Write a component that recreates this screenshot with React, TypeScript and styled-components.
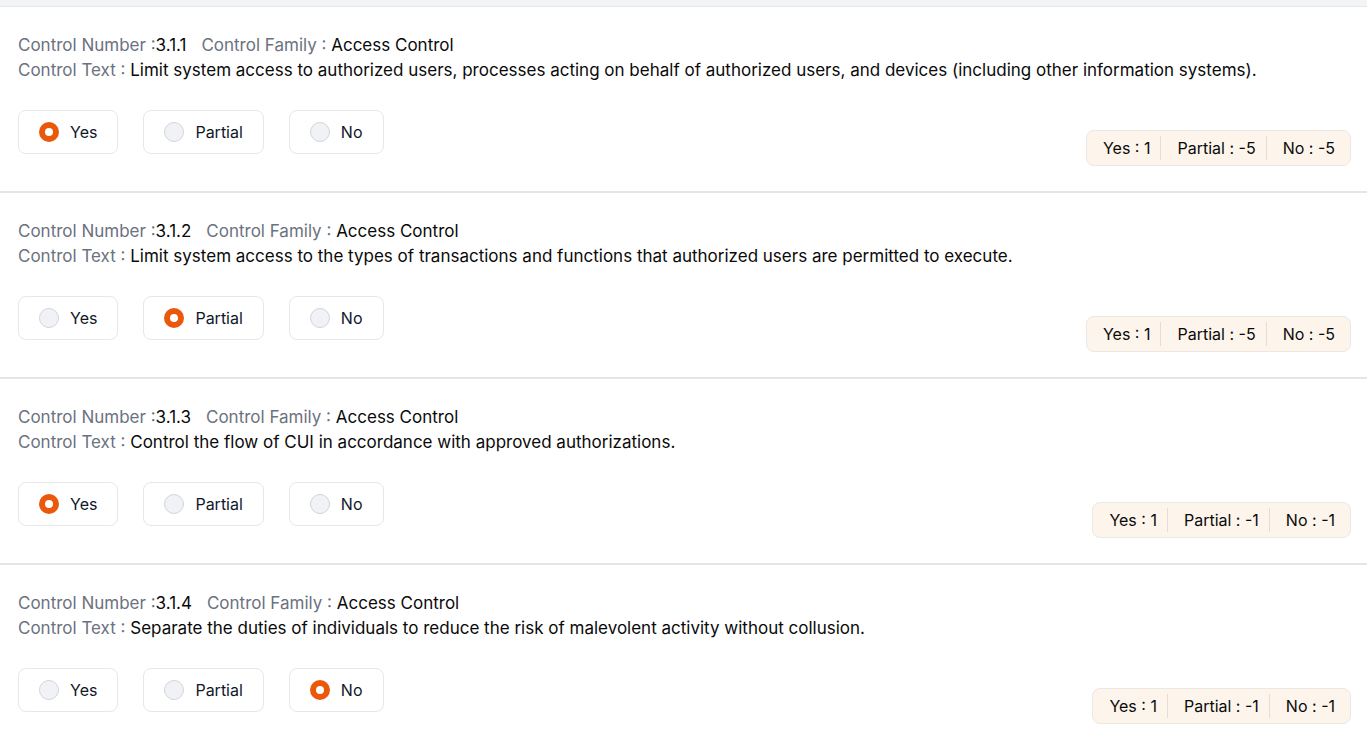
import React from 'react';
import styled, { createGlobalStyle } from 'styled-components';

type Answer = 'yes' | 'partial' | 'no';

interface Control {
  number: string;
  family: string;
  text: string;
  answer: Answer;
  scores: { yes: number; partial: number; no: number };
}

const controls: Control[] = [
  {
    number: '3.1.1',
    family: 'Access Control',
    text: 'Limit system access to authorized users, processes acting on behalf of authorized users, and devices (including other information systems).',
    answer: 'yes',
    scores: { yes: 1, partial: -5, no: -5 },
  },
  {
    number: '3.1.2',
    family: 'Access Control',
    text: 'Limit system access to the types of transactions and functions that authorized users are permitted to execute.',
    answer: 'partial',
    scores: { yes: 1, partial: -5, no: -5 },
  },
  {
    number: '3.1.3',
    family: 'Access Control',
    text: 'Control the flow of CUI in accordance with approved authorizations.',
    answer: 'yes',
    scores: { yes: 1, partial: -1, no: -1 },
  },
  {
    number: '3.1.4',
    family: 'Access Control',
    text: 'Separate the duties of individuals to reduce the risk of malevolent activity without collusion.',
    answer: 'no',
    scores: { yes: 1, partial: -1, no: -1 },
  },
];

const GlobalStyle = createGlobalStyle`
  * { box-sizing: border-box; }
  body {
    margin: 0;
    background: #fff;
    font-family: Inter, 'Noto Sans', sans-serif;
    color: #111827;
  }
`;

const TopBand = styled.div`
  height: 7px;
  background: #f3f4f6;
  border-bottom: 1px solid #e5e7eb;
`;

const List = styled.div`
  display: flex;
  flex-direction: column;
`;

const ControlSection = styled.section`
  height: 186px;
  padding: 26px 16px 0 18px;
  border-bottom: 2px solid #e5e5e5;
  &:last-child {
    border-bottom: none;
  }
`;

const InfoLine = styled.div`
  font-size: 17px;
  line-height: 25px;
  color: #0a0a0a;
  white-space: nowrap;
`;

const Label = styled.span`
  color: #6b7280;
`;

const Spacer = styled.span`
  display: inline-block;
  width: 15px;
`;

const BottomRow = styled.div`
  display: flex;
  justify-content: space-between;
  align-items: flex-start;
  margin-top: 27px;
`;

const Options = styled.div`
  display: flex;
  gap: 25px;
`;

const OptionButton = styled.label`
  display: flex;
  align-items: center;
  gap: 11px;
  height: 44px;
  padding: 0 20px;
  border: 1px solid #e5e7eb;
  border-radius: 8px;
  background: #fff;
  font-size: 16px;
  color: #0f172a;
  cursor: pointer;
`;

const Radio = styled.span<{ $checked: boolean }>`
  width: 20px;
  height: 20px;
  border-radius: 50%;
  flex-shrink: 0;
  background: ${(p) => (p.$checked ? '#fff' : '#f1f2f5')};
  border: ${(p) => (p.$checked ? '6.5px solid #ea580c' : '1px solid #d1d5db')};
`;

const ScoreBox = styled.div`
  display: flex;
  align-items: center;
  margin-top: 20px;
  height: 36px;
  background: #fdf5ec;
  border: 1px solid #ece7e2;
  border-radius: 8px;
  font-size: 16px;
  color: #0a0a0a;
`;

const ScoreItem = styled.span`
  padding: 0 10px 0 16px;
  line-height: 24px;
  & + & {
    border-left: 1px solid #e7ddd2;
  }
  &:last-child {
    padding-right: 15px;
  }
`;

const labels: Record<Answer, string> = { yes: 'Yes', partial: 'Partial', no: 'No' };

const App: React.FC = () => {
  return (
    <>
      <GlobalStyle />
      <TopBand />
      <List>
        {controls.map((c) => (
          <ControlSection key={c.number}>
            <InfoLine>
              <Label>Control Number :</Label>
              {c.number}
              <Spacer />
              <Label>Control Family : </Label>
              {c.family}
            </InfoLine>
            <InfoLine>
              <Label>Control Text : </Label>
              {c.text}
            </InfoLine>
            <BottomRow>
              <Options>
                {(['yes', 'partial', 'no'] as Answer[]).map((a) => (
                  <OptionButton key={a}>
                    <Radio $checked={c.answer === a} />
                    {labels[a]}
                  </OptionButton>
                ))}
              </Options>
              <ScoreBox>
                <ScoreItem>Yes : {c.scores.yes}</ScoreItem>
                <ScoreItem>Partial : {c.scores.partial}</ScoreItem>
                <ScoreItem>No : {c.scores.no}</ScoreItem>
              </ScoreBox>
            </BottomRow>
          </ControlSection>
        ))}
      </List>
    </>
  );
};

export default App;
